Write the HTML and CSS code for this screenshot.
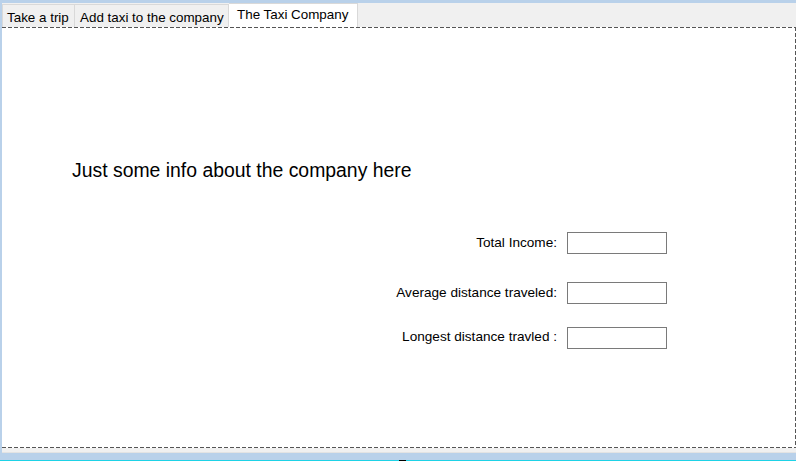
FILE: index.html
```html
<!DOCTYPE html>
<html>
<head>
<meta charset="utf-8">
<link rel="stylesheet" href="styles.css">
</head>
<body>
<div class="window">
  <div class="tabctl">
    <div class="tabs">
      <div class="tab t1">Take a trip</div>
      <div class="tab t2">Add taxi to the company</div>
      <div class="tab active">The Taxi Company</div>
    </div>
    <div class="panel">
      <h1 class="info">Just some info about the company here</h1>
      <div class="form">
        <div class="row r1"><span class="lbl">Total Income:</span><div class="box"></div></div>
        <div class="row r2"><span class="lbl">Average distance traveled:</span><div class="box"></div></div>
        <div class="row r3"><span class="lbl">Longest distance travled :</span><div class="box"></div></div>
      </div>
    </div>
    <div class="under"></div>
  </div>
  <div class="bottom"><span class="mark"></span></div>
</div>
</body>
</html>
```

FILE: styles.css
```css
html, body {
  margin: 0;
  padding: 0;
}
body {
  width: 796px;
  height: 461px;
  overflow: hidden;
  background: #b9d1ea;
  font-family: "Liberation Sans", Arial, sans-serif;
  color: #000;
}
.window {
  display: flex;
  flex-direction: column;
  height: 461px;
  padding: 3px 0 0 2px;
  box-sizing: border-box;
}
.tabctl {
  background: #f0f0f0;
  display: flex;
  flex-direction: column;
}
.tabs {
  display: flex;
  align-items: flex-end;
  height: 24px;
}
.tab {
  box-sizing: border-box;
  height: 23px;
  border: 1px solid #d9d9d9;
  border-bottom: none;
  background: #f0f0f0;
  font-size: 13.4px;
  line-height: 20px;
  padding-top: 3px;
  white-space: nowrap;
}
.t1 {
  width: 73px;
  padding-left: 4px;
}
.t2 {
  width: 154px;
  padding-left: 5px;
  border-left: none;
}
.tab.active {
  height: 24px;
  width: 129px;
  padding-top: 1px;
  padding-left: 8px;
  background: #fff;
  border-left: none;
}
.panel {
  box-sizing: border-box;
  height: 421px;
  padding: 1px 1px 1px 0;
  background:
    repeating-linear-gradient(90deg, #555 0 4px, transparent 4px 6px) left top / 100% 1px no-repeat,
    repeating-linear-gradient(90deg, #555 0 4px, transparent 4px 6px) left bottom / 100% 1px no-repeat,
    repeating-linear-gradient(180deg, #555 0 4px, transparent 4px 6px) right top / 1px 100% no-repeat,
    #fff;
  display: flex;
  flex-direction: column;
}
.info {
  margin: 131px 0 0 70px;
  font-weight: normal;
  font-size: 19.4px;
  line-height: 22px;
}
.form {
  display: flex;
  flex-direction: column;
  align-items: flex-end;
  margin-right: 128px;
}
.row {
  display: flex;
  align-items: center;
  gap: 10px;
}
.r1 { margin-top: 51px; }
.r2 { margin-top: 28px; }
.r3 { margin-top: 23px; }
.lbl {
  font-size: 13.6px;
  line-height: 16px;
}
.r3 .lbl {
  margin-bottom: 3px;
}
.box {
  box-sizing: border-box;
  width: 100px;
  height: 22px;
  border: 1px solid #7a7a7a;
  background: #fff;
}
.under {
  height: 5px;
  border-bottom: 1px solid #e3e3e3;
  box-sizing: border-box;
}
.bottom {
  margin-top: auto;
  margin-left: -2px;
  height: 1px;
  background: #1ed2e6;
}
.mark {
  display: block;
  width: 7px;
  height: 1px;
  margin-left: 399px;
  background: #000;
}
```
